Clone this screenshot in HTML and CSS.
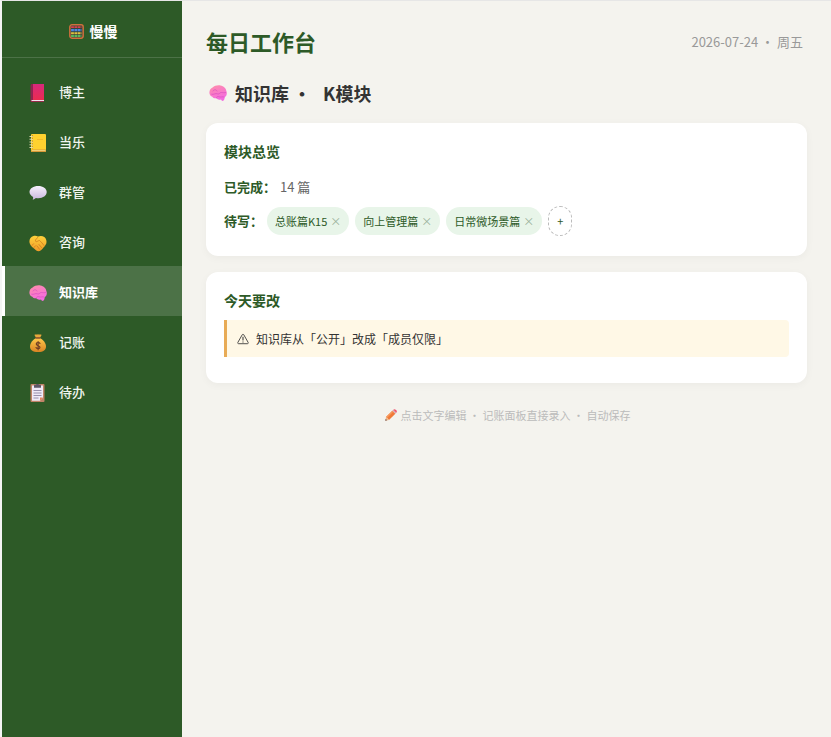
FILE: index.html
```html
<!DOCTYPE html>
<html lang="zh-CN">

<head>
  <meta charset="UTF-8" />
  <title>每日工作台</title>
  <meta name="viewport" content="width=device-width, initial-scale=1.0" />
  <link rel="stylesheet" href="styles.css">
</head>

<body>
  <svg class="defs" aria-hidden="true">
    <defs>
      <linearGradient id="g-pink" x1="0" y1="0" x2="0.4" y2="1">
        <stop offset="0" stop-color="#ff8fa8" />
        <stop offset="1" stop-color="#f46be0" />
      </linearGradient>
      <linearGradient id="g-red" x1="0" y1="0" x2="0" y2="1">
        <stop offset="0" stop-color="#d8287c" />
        <stop offset="1" stop-color="#ea2c50" />
      </linearGradient>
      <linearGradient id="g-gold" x1="0" y1="0" x2="0" y2="1">
        <stop offset="0" stop-color="#ffd23c" />
        <stop offset="1" stop-color="#f09a28" />
      </linearGradient>
      <linearGradient id="g-bag" x1="0" y1="0" x2="0" y2="1">
        <stop offset="0" stop-color="#ffc94a" />
        <stop offset="1" stop-color="#d98424" />
      </linearGradient>
      <linearGradient id="g-talk" x1="0" y1="0" x2="0" y2="1">
        <stop offset="0" stop-color="#f6f0fc" />
        <stop offset="1" stop-color="#c9b8de" />
      </linearGradient>
      <symbol id="i-brain" viewBox="0 0 18 18">
        <path fill="url(#g-pink)" d="M.5 9.500C0 6.500 1.600 4.500 3.600 3.600C5.400 1.400 9 .9 11.500 1.400C14.500 1.800 17.200 4.300 17.500 7.500C18.400 9.800 17.300 12.300 15.700 13.300C15.700 15 14.900 17 13.800 17C12.700 17 12.500 16 12 15.500C10 16.200 8.300 15.500 7.300 14.300C5.500 14.500 4 13.800 3.400 12.700C1.600 12.300.8 11 .5 9.500Z" />
        <path fill="none" stroke="#dc50c0" stroke-width=".8" stroke-linecap="round" d="M4 7C5 5 7.500 5.500 8 7M2.800 10.300C5 10.800 6.500 9 8.500 9.800C10.500 10.500 10.500 8.500 12.500 8.500C14 8.500 15 9 16.500 8.500M7.500 13.800C7.500 12.500 9 12.300 10.200 12.800C12 13.500 13.500 12.300 15 13" />
      </symbol>
      <symbol id="i-book" viewBox="0 0 18 18">
        <path fill="#8f2450" d="M1.500 1.500C1.500.6 2 0 3 0H4V17.500H2.200C1.700 17.500 1.500 17 1.500 16.500Z" />
        <path fill="url(#g-red)" d="M4 0H15V16H4Z" />
        <path fill="#f6dfee" d="M2.500 16H15V17H2.500Z" />
        <path fill="#b02050" d="M2 17H15V17.800H2Z" />
      </symbol>
      <symbol id="i-ledger" viewBox="0 0 18 18">
        <rect x="2" y="0" width="15" height="18" rx="1" fill="#ffd12f" />
        <path fill="#d99a38" d="M2.500 15.500H17V17C17 17.600 16.600 18 16 18H3C2.500 18 2.500 17.500 2.500 17Z" />
        <path fill="#fff0a0" d="M3 16.200H16.500V16.800H3Z" />
        <path stroke="#f0b428" stroke-width=".8" d="M8 5.500H14" />
        <path fill="none" stroke="#e6dcb4" stroke-width="1" d="M.5 2.500H4M.5 5.200H4M.5 8H4M.5 10.800H4M.5 13.500H4" />
        <path stroke="#b78c2c" stroke-width=".8" d="M3.500 1V15" stroke-dasharray="1.400 1.300" />
      </symbol>
      <symbol id="i-talk" viewBox="0 0 18 18">
        <path fill="url(#g-talk)" d="M9.200 2C14 2 17.700 4.500 17.700 8.100C17.700 11.700 14 14.200 9.500 14.200C8.600 14.200 7.700 14.100 6.900 14C6 14.900 4.800 15.700 3.600 15.600C4.100 14.800 4.300 13.800 4.100 12.900C2 11.800.5 10.200.5 8.100C.5 4.500 4.400 2 9.200 2Z" />
      </symbol>
      <symbol id="i-hands" viewBox="0 0 18 18">
        <path fill="url(#g-gold)" d="M.4 8C.3 5 2 2.500 4.500 2C6 1.700 7.500 1.800 9 2.400C11 1.700 13.500 1.600 15.300 3C17.200 4.500 18 7.500 17.300 9.500C16.700 11 15.500 12.500 14.500 13.500C13 15.500 11 17.300 9.500 17.300C8 17.300 6.500 16 5 14.500C3 13 .5 10.500.4 8Z" />
        <path fill="none" stroke="#c9741c" stroke-width=".7" stroke-linecap="round" d="M9 3.200C7.500 4.500 6 6 6.500 7.200C7.500 8.500 9 6.500 10.500 6.500C12 7.800 13.500 9.500 15 11.500M10 10.500L12.500 13.500M8 12L10.500 15.200M3 11.500L4.500 9.800M5 13.500L6.500 11.800" />
      </symbol>
      <symbol id="i-bag" viewBox="0 0 18 18">
        <path fill="#e8a83c" d="M5.500.8C7 .2 8 1 9 .3C10 1 11.500.2 12.500.8C12.500 2 11.500 2.800 11 3.800H7C6.700 2.800 5.500 2 5.500.8Z" />
        <path fill="url(#g-bag)" d="M7 4H11C14 5.500 17 9 17 12.500C17 16 14.500 18 9 18C3.500 18 1 16 1 12.500C1 9 4 5.500 7 4Z" />
        <rect x="6.300" y="3.200" width="5.400" height="1.500" rx=".7" fill="#8a5030" />
        <path fill="none" stroke="#6b3a24" stroke-width="1.100" stroke-linecap="round" d="M11 9.500C10.500 8.200 7.200 8 7.200 10C7.200 12 11 11.300 11 13.200C11 15 7.500 14.900 7 13.500M9.100 7.500V15.800" />
      </symbol>
      <symbol id="i-clip" viewBox="0 0 18 18">
        <rect x="1.500" y="0" width="14" height="18" rx="1" fill="#c08468" />
        <path fill="#efeaf8" d="M3 1.500H14V13.500L11 16.800H3Z" />
        <path fill="#e2825c" d="M14 13.500L11 16.800V13.500Z" />
        <path fill="#5e5868" d="M5 1.500C5 .8 6 .8 6.800.8C7.200-.3 9.800-.3 10.200.8C11 .8 12 .8 12 1.500V3.800H5Z" />
        <path stroke="#8e86a4" stroke-width=".9" d="M4.500 6.500H12.500M4.500 9H12.500M4.500 11.500H12.500M4.500 14H9.500" />
      </symbol>
      <symbol id="i-abacus" viewBox="0 0 18 18">
        <rect x="1" y="1" width="16" height="16" rx="2.500" fill="#35453a" stroke="#d0703c" stroke-width="1.800" />
        <path stroke="#d8404c" stroke-width="2.200" stroke-dasharray="3.400 .6" d="M2.500 3.800H15" />
        <path stroke="#4c86e0" stroke-width="2.800" stroke-dasharray="3.400 .6" d="M2.500 7.300H15" />
        <path stroke="#e0c040" stroke-width="2.400" stroke-dasharray="3.400 .6" d="M2.500 11H15" />
        <path stroke="#5cb85c" stroke-width="2.400" stroke-dasharray="3.400 .6" d="M2.500 14.300H15" />
      </symbol>
      <symbol id="i-pencil" viewBox="0 0 18 18">
        <path fill="#f07a38" d="M11 2.500L15.500 7L6 16.500L1.500 12Z" />
        <path fill="#f8985a" d="M11 2.500L12.500 4L3 13.500L1.500 12Z" />
        <path fill="#d8a8b0" d="M11 2.500L12.500 1L17 5.500L15.500 7Z" />
        <path fill="#f0506c" d="M12.500 1C13.700-.1 15 0 16 1L17 2C18 3 18.100 4.300 17 5.500Z" />
        <path fill="#f0b888" d="M1.500 12L6 16.500L.6 17.500Z" />
        <path fill="#5a3a3c" d="M1 15L3 17L.4 17.800Z" />
      </symbol>
      <symbol id="i-warn" viewBox="0 0 14 14">
        <path fill="none" stroke="currentColor" stroke-width="1" stroke-linejoin="round" d="M7 1.500C7.500 1.500 7.800 1.800 8 2.200L13 11C13.400 11.800 13 12.500 12.200 12.500H1.800C1 12.500.6 11.800 1 11L6 2.200C6.200 1.800 6.500 1.500 7 1.500Z" />
        <path stroke="currentColor" stroke-width="1.200" d="M7 4.500V8.800M7 9.800V11" />
      </symbol>
    </defs>
  </svg>

  <div class="app">
    <aside class="sidebar">
      <div class="brand">
        <svg class="icon-brand"><use href="#i-abacus" /></svg>
        <span>慢慢</span>
      </div>
      <nav class="menu">
        <a href="#bozhu"><svg class="icon"><use href="#i-book" /></svg>博主</a>
        <a href="#dangle"><svg class="icon"><use href="#i-ledger" /></svg>当乐</a>
        <a href="#qunguan"><svg class="icon"><use href="#i-talk" /></svg>群管</a>
        <a href="#zixun"><svg class="icon"><use href="#i-hands" /></svg>咨询</a>
        <a href="#zhishiku" class="active"><svg class="icon"><use href="#i-brain" /></svg>知识库</a>
        <a href="#jizhang"><svg class="icon"><use href="#i-bag" /></svg>记账</a>
        <a href="#daiban"><svg class="icon"><use href="#i-clip" /></svg>待办</a>
      </nav>
    </aside>

    <main class="main">
      <header class="topbar">
        <h1>每日工作台</h1>
        <span class="date">2026-07-24 ・ 周五</span>
      </header>

      <h2 class="section-title">
        <svg class="icon"><use href="#i-brain" /></svg>
        <span>知识库 ・</span>
        <span>K模块</span>
      </h2>

      <section class="card">
        <h3>模块总览</h3>
        <div class="row">
          <strong>已完成：</strong>
          <span class="value">14 篇</span>
        </div>
        <div class="row">
          <strong>待写：</strong>
          <div class="chips">
            <span class="chip">总账篇K15<button aria-label="删除">×</button></span>
            <span class="chip">向上管理篇<button aria-label="删除">×</button></span>
            <span class="chip">日常微场景篇<button aria-label="删除">×</button></span>
            <button class="add" aria-label="添加">+</button>
          </div>
        </div>
      </section>

      <section class="card">
        <h3>今天要改</h3>
        <div class="alert">
          <svg class="icon-warn"><use href="#i-warn" /></svg>
          <span>知识库从「公开」改成「成员仅限」</span>
        </div>
      </section>

      <footer class="hint">
        <svg class="icon-hint"><use href="#i-pencil" /></svg>
        <span>点击文字编辑 ・ 记账面板直接录入 ・ 自动保存</span>
      </footer>
    </main>
  </div>
</body>

</html>
```
FILE: styles.css
```css
:root {
  --green: #2d5a27;
  --green-light: #e8f5e9;
  --bg: #f4f3ee;
  --line: #e6e6e6;
}

* {
  box-sizing: border-box;
}

body {
  margin: 0;
  font-family: "Noto Sans CJK SC", sans-serif;
  font-size: 13px;
  color: #333;
  background-color: var(--bg);
}

button {
  font-family: inherit;
  border: 0;
  padding: 0;
  background: none;
  cursor: pointer;
}

.defs {
  position: absolute;
  width: 0;
  height: 0;
}

.app {
  display: flex;
  min-height: 100vh;
  border-top: 1px solid var(--line);
  border-left: 2px solid #f4f4f4;
}

/* 侧边栏 */
.sidebar {
  flex: none;
  width: 180px;
  color: #fff;
  background-color: var(--green);
}

.brand {
  display: flex;
  align-items: center;
  justify-content: center;
  gap: 6px;
  height: 57px;
  padding: 4px 0 0 2px;
  font-size: 14px;
  font-weight: 700;
  border-bottom: 1px solid rgba(255, 255, 255, 0.15);
}

.icon-brand {
  width: 15px;
  height: 15px;
}

.icon {
  flex: none;
  width: 18px;
  height: 18px;
}

.menu {
  padding: 8px 0;
}

.menu a {
  display: flex;
  align-items: center;
  gap: 12px;
  height: 50px;
  padding: 0 24px;
  border-left: 3px solid transparent;
  color: #f0f5ef;
  font-weight: 500;
  text-decoration: none;
}

.menu a.active {
  color: #fff;
  font-weight: 700;
  background-color: rgba(255, 255, 255, 0.15);
  border-left-color: #fff;
  background-clip: padding-box;
}

.menu .icon {
  margin-top: 3px;
}

/* 主区域 */
.main {
  flex: 1;
  min-width: 0;
  padding: 24px;
}

.topbar {
  display: flex;
  align-items: center;
  justify-content: space-between;
  padding-right: 4px;
}

h1 {
  margin: 0;
  font-size: 22px;
  line-height: 32px;
  color: var(--green);
}

.date {
  color: #999;
}

.section-title {
  display: flex;
  align-items: center;
  gap: 8px;
  margin: 22px 0 16px;
  padding-left: 3px;
  font-size: 18px;
  line-height: 28px;
}

.section-title .icon + span {
  margin-right: 4px;
}

/* 卡片 */
.card {
  margin-bottom: 16px;
  padding: 18px 18px 17px;
  background-color: #fff;
  border-radius: 12px;
  box-shadow: 0 2px 8px rgba(0, 0, 0, 0.04);
}

.card h3 {
  margin: 0 0 10px;
  font-size: 14px;
  line-height: 20px;
  color: var(--green);
}

.row {
  display: flex;
  align-items: center;
  gap: 4px;
  padding: 3px 0;
  line-height: 26px;
}

.row strong {
  color: var(--green);
}

.value {
  color: #666;
}

.chips {
  display: flex;
  flex-wrap: wrap;
  align-items: center;
  gap: 6px;
}

.chip {
  display: flex;
  align-items: center;
  gap: 3px;
  padding: 0 8px;
  font-size: 11px;
  line-height: 28px;
  color: var(--green);
  background-color: var(--green-light);
  border-radius: 14px;
}

.chip button {
  font-size: 11px;
  line-height: 16px;
  color: #9bb09a;
}

.add {
  width: 24px;
  height: 30px;
  font-size: 11px;
  color: var(--green);
  border: 1px dashed #bbb;
  border-radius: 12px;
}

.alert {
  display: flex;
  align-items: center;
  gap: 7px;
  margin-bottom: 9px;
  padding: 8px 10px;
  font-size: 12px;
  line-height: 21px;
  background-color: #fff8e6;
  border-left: 3px solid #e8ab56;
  border-radius: 0 4px 4px 0;
}

.icon-warn {
  width: 12px;
  height: 12px;
}

.hint {
  display: flex;
  align-items: center;
  justify-content: center;
  gap: 4px;
  padding: 8px 0 0 2px;
  font-size: 11px;
  line-height: 16px;
  color: #bbb;
}

.icon-hint {
  width: 12px;
  height: 12px;
}
```
